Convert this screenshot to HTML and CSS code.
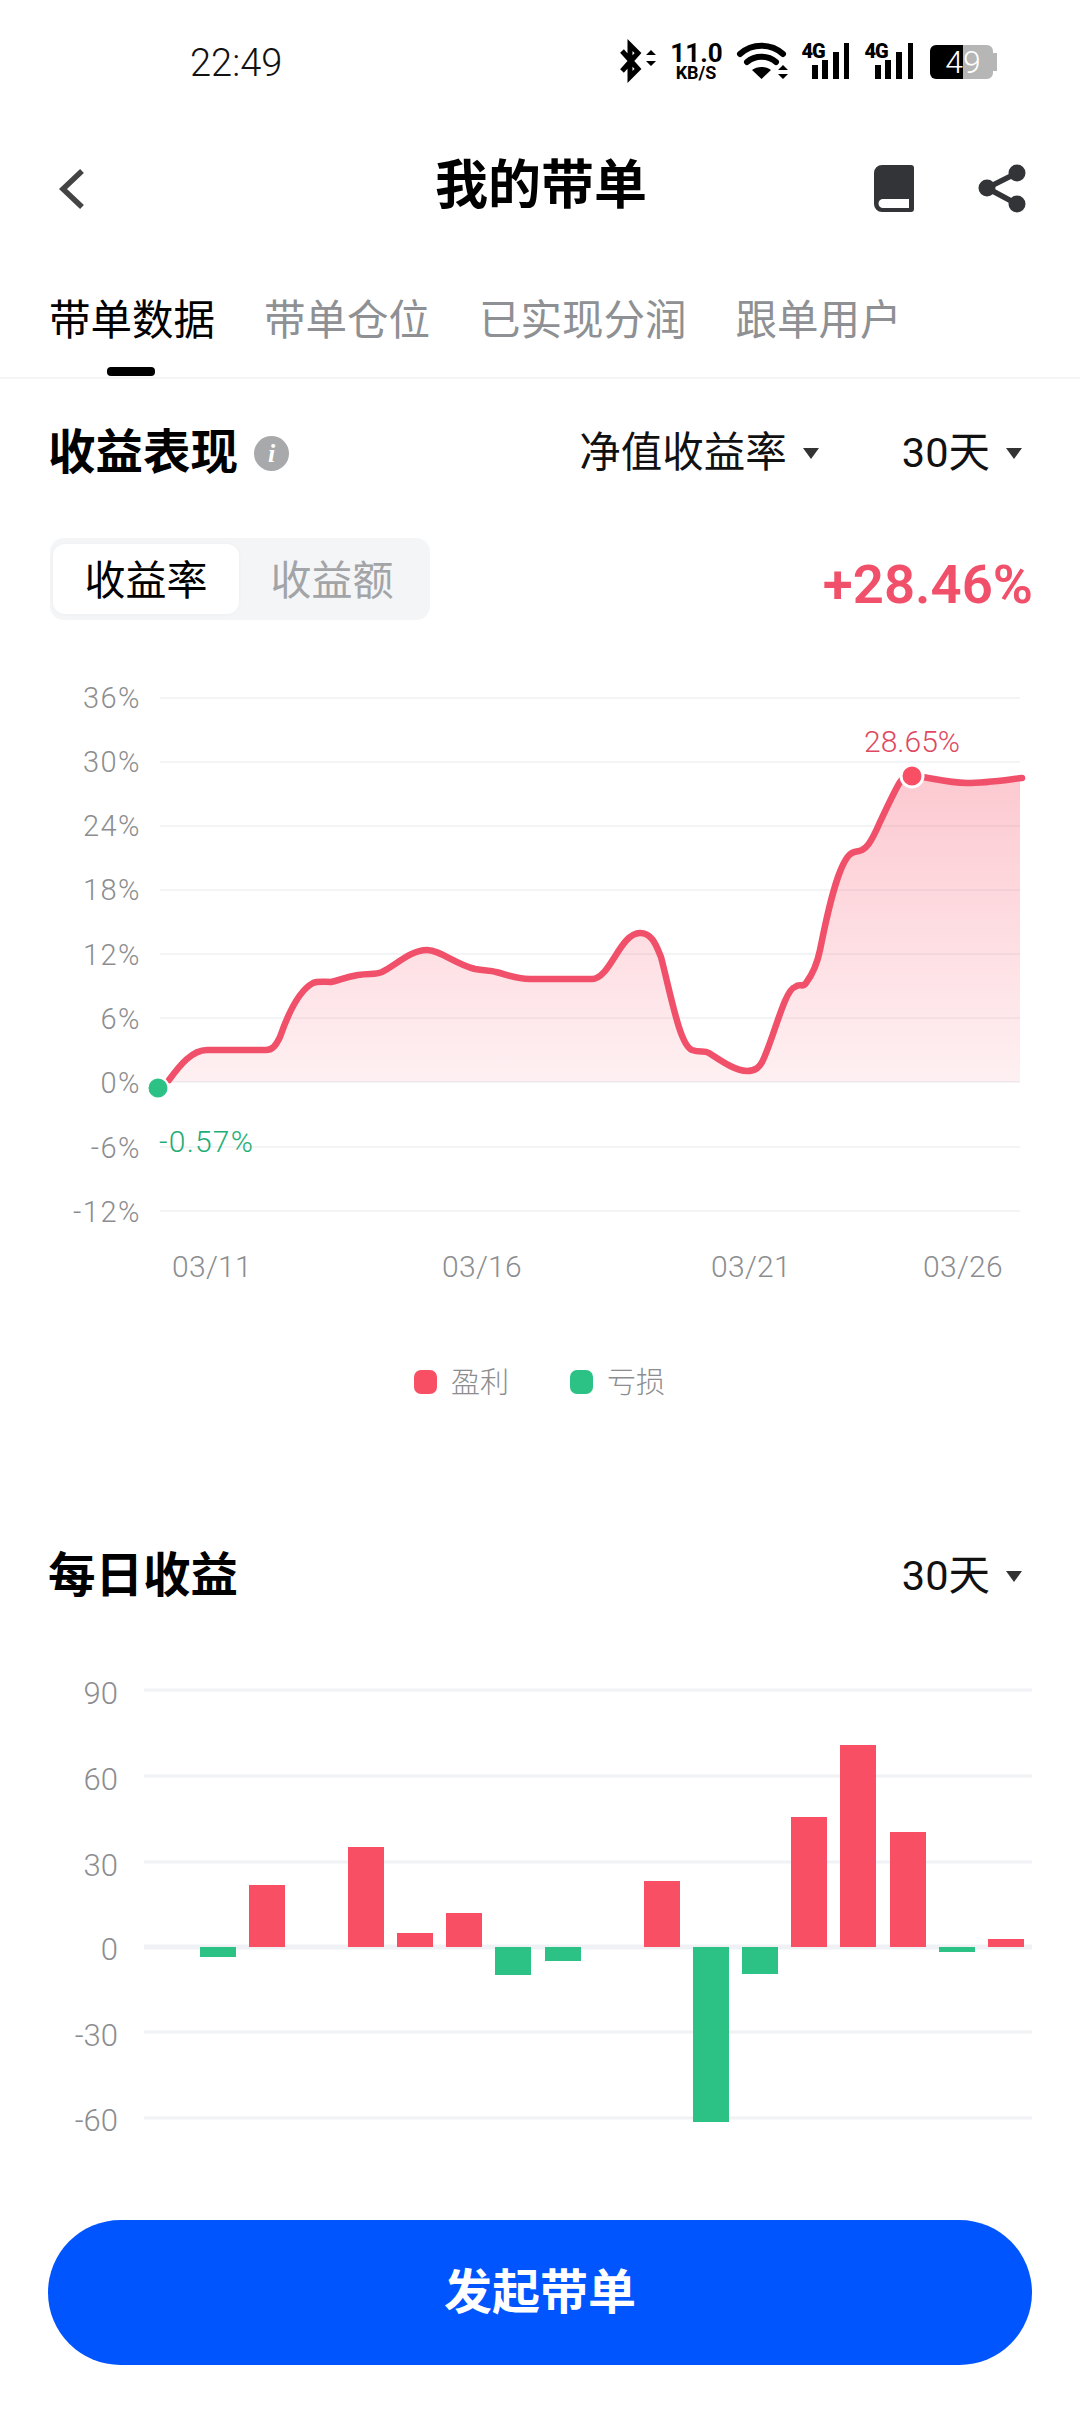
FILE: index.html
```html
<!DOCTYPE html>
<html lang="zh-CN">
<head>
<meta charset="utf-8">
<title>我的带单</title>
<link rel="stylesheet" href="styles.css">
</head>
<body>
<main class="page">
  <header class="status">
    <span class="time">22:49</span>
    <svg class="status-icons" viewBox="620 32 377 60" width="377" height="60">
      <path class="st-line" d="M622 51l16 18-8 8V45l8 8-16 18"/>
      <path class="st-fill" d="M651 50l5 5h-10zM651 66l-5-5h10z"/>
      <text class="st-num" x="696.5" y="62">11.0</text>
      <text class="st-unit" x="696" y="79">KB/S</text>
      <path class="st-wifi" d="M740 54c12-11 31-11 43 0M747 62c8-7 21-7 29 0"/>
      <path class="st-fill" d="M752 70c5-4 14-4 19 0l-9.500 9zM783 65l5 5h-10zM783 79l-5-5h10z"/>
      <text class="st-4g" x="813" y="58">4G</text>
      <path class="st-fill" d="M812 65h6v14h-6zM822 60h6v19h-6zM833 52h6v27h-6zM844 43h5v36h-5z"/>
      <text class="st-4g" x="876" y="58">4G</text>
      <path class="st-fill" d="M875 65h6v14h-6zM885 60h6v19h-6zM896 52h6v27h-6zM908 43h5v36h-5z"/>
      <path class="bat-rest" d="M963 45h24a6 6 0 0 1 6 6v2h4v18h-4v2a6 6 0 0 1-6 6h-24z"/>
      <path class="st-fill" d="M963 45h-27a6 6 0 0 0-6 6v22a6 6 0 0 0 6 6h27z"/>
      <text class="bat-num" x="963" y="73">49</text>
    </svg>
  </header>

  <nav class="nav">
    <svg class="back" viewBox="0 0 30 44" width="30" height="44"><path d="M26 4 7 22l19 18"/></svg>
    <h1 class="title">我的带单</h1>
    <div class="nav-actions">
      <svg viewBox="874 164 40 47" width="40" height="47"><path class="ico" fill-rule="evenodd" d="M882 164h29a3 3 0 0 1 3 3v41a3 3 0 0 1-3 3h-29a8 8 0 0 1-8-8v-31a8 8 0 0 1 8-8zM883 198a4.500 4.500 0 0 0 0 9h26v-9z"/></svg>
      <svg viewBox="978 163 48 49" width="48" height="49"><path class="ico-line" d="M1017 172l-30 15 30 16"/><circle class="ico" cx="1017" cy="172" r="8.500"/><circle class="ico" cx="987" cy="187" r="8.500"/><circle class="ico" cx="1017" cy="203" r="8.500"/></svg>
    </div>
  </nav>

  <div class="tabs">
    <span class="tab tab-on">带单数据</span>
    <span class="tab">带单仓位</span>
    <span class="tab">已实现分润</span>
    <span class="tab">跟单用户</span>
  </div>

  <section class="head head-perf">
    <h2 class="h2">收益表现</h2>
    <span class="info">i</span>
    <span class="pick pick-metric">净值收益率<i class="caret"></i></span>
    <span class="pick pick-range">30天<i class="caret"></i></span>
  </section>

  <div class="toggle-row">
    <div class="toggle">
      <span class="seg seg-on">收益率</span>
      <span class="seg">收益额</span>
    </div>
    <strong class="gain">+28.46%</strong>
  </div>

  <svg class="chart chart-line" viewBox="0 640 1080 780" width="1080" height="780">
    <defs>
      <linearGradient id="areaFill" x1="0" y1="0" x2="0" y2="1">
        <stop offset="0" stop-color="#f6455f" stop-opacity=".29"/>
        <stop offset="1" stop-color="#f6455f" stop-opacity=".08"/>
      </linearGradient>
    </defs>
    <g class="grid">
      <path d="M160 698H1020M160 762H1020M160 826H1020M160 890H1020M160 954H1020M160 1018H1020M160 1082H1020M160 1147H1020M160 1211H1020"/>
    </g>
    <g class="axis axis-y">
      <text x="141" y="708">36%</text>
      <text x="141" y="772">30%</text>
      <text x="141" y="836">24%</text>
      <text x="141" y="900">18%</text>
      <text x="141" y="965">12%</text>
      <text x="141" y="1029">6%</text>
      <text x="141" y="1093">0%</text>
      <text x="141" y="1158">-6%</text>
      <text x="141" y="1222">-12%</text>
    </g>
    <path fill="url(#areaFill)" d="M169 1082V1080C180 1065 192 1050 207 1050L266 1050C273 1050 276 1045 280 1037C290 1008 300 990 313 983C318 981 323 982 331 982C340 980 345 977 358 975C370 973 375 975 382 972C395 966 410 950 427 950C440 950 455 964 475 969C485 971 490 970 496 972C508 975 515 979 530 979L592 979C610 979 620 933 640 933C652 933 656 945 661 957C672 1000 680 1045 692 1050C700 1053 704 1050 709 1053C720 1060 735 1071 747 1071C755 1071 760 1068 764 1058C776 1030 785 990 795 987C800 983 803 988 806 983C812 975 817 965 820 950C826 920 838 860 852 853C855 851 857 852 862 850C866 848 870 845 880 822C888 805 895 790 900 782C904 776 908 776 912 776C925 776 945 783 967 783C985 783 1005 780 1020 778V1082Z"/>
    <path class="curve" d="M169 1080C180 1065 192 1050 207 1050L266 1050C273 1050 276 1045 280 1037C290 1008 300 990 313 983C318 981 323 982 331 982C340 980 345 977 358 975C370 973 375 975 382 972C395 966 410 950 427 950C440 950 455 964 475 969C485 971 490 970 496 972C508 975 515 979 530 979L592 979C610 979 620 933 640 933C652 933 656 945 661 957C672 1000 680 1045 692 1050C700 1053 704 1050 709 1053C720 1060 735 1071 747 1071C755 1071 760 1068 764 1058C776 1030 785 990 795 987C800 983 803 988 806 983C812 975 817 965 820 950C826 920 838 860 852 853C855 851 857 852 862 850C866 848 870 845 880 822C888 805 895 790 900 782C904 776 908 776 912 776C925 776 945 783 967 783C985 783 1005 780 1022 778"/>
    <circle class="dot-up" cx="912" cy="776" r="11"/>
    <circle class="dot-down" cx="158" cy="1088" r="10.500"/>
    <text class="mark mark-up" x="912" y="752">28.65%</text>
    <text class="mark mark-down" x="159" y="1152">-0.57%</text>
    <g class="axis axis-x">
      <text x="212" y="1277">03/11</text>
      <text x="482" y="1277">03/16</text>
      <text x="751" y="1277">03/21</text>
      <text x="963" y="1277">03/26</text>
    </g>
    <rect class="up" x="414" y="1370" width="23" height="24" rx="7"/>
    <text class="legend" x="451" y="1393">盈利</text>
    <rect class="down" x="570" y="1370" width="23" height="24" rx="7"/>
    <text class="legend" x="607" y="1393">亏损</text>
  </svg>

  <section class="head head-daily">
    <h2 class="h2">每日收益</h2>
    <span class="pick pick-range">30天<i class="caret"></i></span>
  </section>

  <svg class="chart chart-bars" viewBox="0 1660 1080 500" width="1080" height="500">
    <path class="grid-b" d="M144 1690H1032M144 1776H1032M144 1862H1032M144 2032H1032M144 2118H1032"/>
    <path class="grid-zero" d="M144 1947H1032"/>
    <g class="axis axis-b">
      <text x="118" y="1704">90</text>
      <text x="118" y="1790">60</text>
      <text x="118" y="1876">30</text>
      <text x="118" y="1960">0</text>
      <text x="118" y="2046">-30</text>
      <text x="118" y="2131">-60</text>
    </g>
    <g class="up">
      <rect x="249" y="1885" width="36" height="62"/>
      <rect x="348" y="1847" width="36" height="100"/>
      <rect x="397" y="1933" width="36" height="14"/>
      <rect x="446" y="1913" width="36" height="34"/>
      <rect x="644" y="1881" width="36" height="66"/>
      <rect x="791" y="1817" width="36" height="130"/>
      <rect x="840" y="1745" width="36" height="202"/>
      <rect x="890" y="1832" width="36" height="115"/>
      <rect x="988" y="1939" width="36" height="8"/>
    </g>
    <g class="down">
      <rect x="200" y="1947" width="36" height="10"/>
      <rect x="495" y="1947" width="36" height="28"/>
      <rect x="545" y="1947" width="36" height="14"/>
      <rect x="693" y="1947" width="36" height="175"/>
      <rect x="742" y="1947" width="36" height="27"/>
      <rect x="939" y="1947" width="36" height="5"/>
    </g>
  </svg>

  <button class="cta">发起带单</button>
</main>
</body>
</html>
```

FILE: styles.css
```css
* { box-sizing: border-box; }
html, body { margin: 0; padding: 0; background: #fff; }
.page {
  width: 1080px;
  height: 2412px;
  overflow: hidden;
  display: flex;
  flex-direction: column;
  font-family: Roboto, "Noto Sans CJK SC", sans-serif;
  color: #000;
}

/* status bar */
.status {
  height: 124px;
  flex: none;
  display: flex;
  align-items: center;
  justify-content: space-between;
  padding: 0 83px 0 190px;
}
.time { font-size: 38px; font-weight: 300; color: #111; padding-top: 2px; }
.status-icons { display: block; }
.st-fill { fill: #000; }
.st-line { fill: none; stroke: #000; stroke-width: 5; stroke-linejoin: miter; }
.st-wifi { fill: none; stroke: #000; stroke-width: 6; stroke-linecap: round; }
.st-num { font-size: 26px; font-weight: 700; text-anchor: middle; }
.st-unit { font-size: 18px; font-weight: 700; text-anchor: middle; }
.st-4g { font-size: 20px; font-weight: 900; text-anchor: middle; letter-spacing: -1px; }
.bat-rest { fill: #b6b6b6; }
.bat-num { font-size: 32px; font-weight: 300; fill: #fff; text-anchor: middle; }

/* nav */
.nav {
  height: 122px;
  flex: none;
  display: grid;
  grid-template-columns: 1fr auto 1fr;
  align-items: center;
  padding: 0 54px 0 56px;
}
.back { display: block; margin-top: 8px; }
.back path { fill: none; stroke: #444; stroke-width: 5.500; }
.title { margin: 0; font-size: 53px; font-weight: 700; line-height: 60px; margin-top: 2px; }
.nav-actions {
  display: flex;
  justify-content: flex-end;
  align-items: center;
  gap: 64px;
  margin-top: 6px;
}
.nav-actions svg { display: block; }
.ico { fill: #333437; }
.ico-line { fill: none; stroke: #333437; stroke-width: 5.500; }

/* tabs */
.tabs {
  height: 133px;
  flex: none;
  display: flex;
  gap: 49px;
  padding: 51px 49px 0;
  border-bottom: 2px solid #f4f5f6;
}
.tab {
  position: relative;
  font-size: 41.500px;
  line-height: 48px;
  height: 48px;
  color: #8e9093;
  white-space: nowrap;
}
.tab-on { color: #000; }
.tab-on::after {
  content: "";
  position: absolute;
  left: 58px;
  top: 70px;
  width: 48px;
  height: 9px;
  border-radius: 4px;
  background: #000;
}

/* section headers */
.head {
  flex: none;
  display: flex;
  align-items: center;
  padding: 0 58px 0 48px;
}
.head-perf { height: 148px; }
.head-daily { height: 60px; margin-top: 126px; justify-content: space-between; }
.h2 { margin: 0; font-size: 47.500px; font-weight: 700; line-height: 56px; }
.info {
  width: 35px;
  height: 35px;
  margin-left: 16px;
  border-radius: 50%;
  background: #a8a9ab;
  color: #fff;
  font: italic 700 26px/35px "Liberation Serif", serif;
  text-align: center;
}
.pick {
  display: flex;
  align-items: center;
  font-size: 41.500px;
  line-height: 48px;
  color: #111;
}
.pick-metric { margin-left: auto; }
.pick-range { margin-left: 83px; }
.caret {
  width: 0;
  height: 0;
  margin-left: 16px;
  border-left: 8.500px solid transparent;
  border-right: 8.500px solid transparent;
  border-top: 11px solid #333;
}

/* toggle */
.toggle-row {
  flex: none;
  height: 82px;
  margin-top: 11px;
  display: flex;
  align-items: center;
  justify-content: space-between;
  padding: 0 47px 0 50px;
}
.toggle {
  width: 380px;
  height: 82px;
  padding: 6px 3px;
  display: flex;
  border-radius: 14px;
  background: #f3f5f7;
}
.seg {
  width: 186px;
  height: 70px;
  text-align: center;
  font-size: 41px;
  line-height: 75px;
  color: #a2a4a7;
}
.seg-on {
  background: #fff;
  border-radius: 12px;
  color: #000;
  box-shadow: 0 0 4px rgba(0, 0, 0, .03);
}
.gain { font-size: 54.500px; line-height: 64px; margin-top: 10px; font-weight: 600; color: #f0506a; }

/* charts */
.chart { display: block; flex: none; margin-top: 20px; }
.chart-bars { margin-top: 54px; }
.grid path { fill: none; stroke: #f3f4f5; stroke-width: 2; }
.grid-b { fill: none; stroke: #f0f2f5; stroke-width: 3; }
.grid-zero { fill: none; stroke: #eff1f5; stroke-width: 5; }
.axis text { fill: #8c8d90; font-weight: 300; }
.axis-y text { font-size: 29px; letter-spacing: 1.500px; text-anchor: end; }
.axis-x text { font-size: 30px; letter-spacing: .3px; text-anchor: middle; }
.axis-b text { font-size: 31px; text-anchor: end; }
.curve { fill: none; stroke: #f0506a; stroke-width: 6.500; stroke-linecap: round; stroke-linejoin: round; }
.dot-up { fill: #f94f65; stroke: #fff; stroke-width: 3; }
.dot-down { fill: #2cc285; stroke: #fff; stroke-width: 2; }
.mark { font-size: 30px; font-weight: 300; }
.mark-up { fill: #e0485f; text-anchor: middle; }
.mark-down { fill: #1fae76; letter-spacing: 1.200px; }
.up { fill: #f94f65; }
.down { fill: #2cc285; }
.legend { font-size: 29px; fill: #8c8d90; font-weight: 300; }

/* button */
.cta {
  flex: none;
  width: 984px;
  height: 145px;
  margin: 60px 0 0 48px;
  padding: 0 0 10px;
  border: 0;
  border-radius: 73px;
  background: #0055ff;
  color: #fff;
  font-family: inherit;
  font-size: 48px;
  font-weight: 700;
}
```
